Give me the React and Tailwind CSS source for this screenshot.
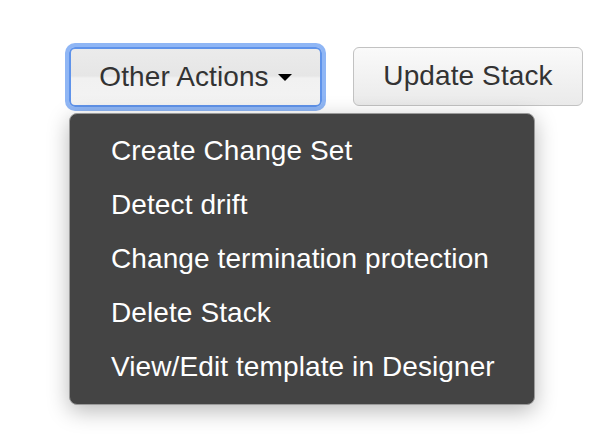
const items = [
  "Create Change Set",
  "Detect drift",
  "Change termination protection",
  "Delete Stack",
  "View/Edit template in Designer",
];

export default function App() {
  return (
    <div
      className="w-[600px] h-[438px] bg-white pt-[47px] pl-[69px] tracking-[0.1px]"
      style={{ fontFamily: '"Liberation Sans", Arial, sans-serif' }}
    >
      <div className="flex gap-[31px]">
        <div className="relative">
          {/* focused dropdown toggle */}
          <button className="w-[253px] h-[60px] flex items-center justify-center gap-[9px] rounded-[6px] border-2 border-[#5f93ea] shadow-[0_0_0_4px_#8fb6f5] bg-[linear-gradient(to_bottom,#ebebeb_0%,#e6e6e6_48%,#f1f1f1_52%,#f3f3f3_100%)] text-[28px] text-[#333] pb-[1px]">
            <span>Other Actions</span>
            <span className="w-0 h-0 border-x-[7px] border-x-transparent border-t-[7px] border-t-black mt-[2px]" />
          </button>

          {/* open menu */}
          <ul className="absolute left-0 top-[66px] w-[466px] py-[10px] rounded-[8px] bg-[#444] border border-[#9a9a9a] shadow-[0_6px_22px_rgba(0,0,0,0.28)] z-10">
            {items.map((item) => (
              <li
                key={item}
                className="h-[54px] flex items-center pl-[41px] text-[28px] text-white"
              >
                {item}
              </li>
            ))}
          </ul>
        </div>

        <button className="w-[230px] h-[59px] flex items-center justify-center rounded-[6px] border border-[#c2c2c2] bg-[linear-gradient(to_bottom,#fafafa,#eaeaea)] text-[28px] text-[#333] pb-[1px]">
          Update Stack
        </button>
      </div>
    </div>
  );
}
